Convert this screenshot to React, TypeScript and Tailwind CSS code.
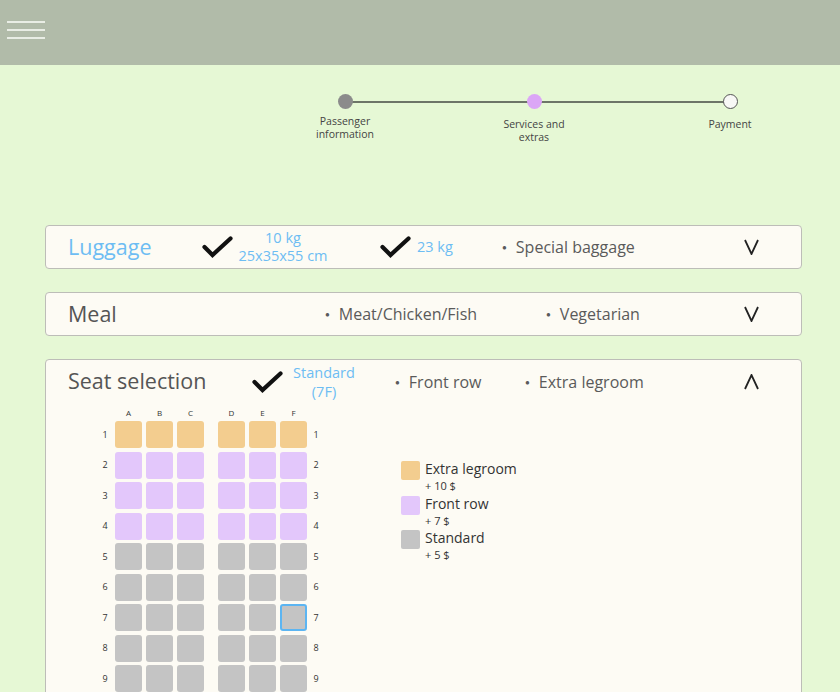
import React from "react";

const F = { fontFamily: "'Open Sans', 'Noto Sans', sans-serif" };

function Check({ className = "" }: { className?: string }) {
  return (
    <svg width="31" height="22" viewBox="0 0 31 22" className={className}>
      <path d="M2.5 11 L10.5 19 L28.5 2.5" fill="none" stroke="#111" strokeWidth="4.2" strokeLinecap="round" strokeLinejoin="miter" />
    </svg>
  );
}

function Chevron({ up = false }: { up?: boolean }) {
  return (
    <svg width="15" height="16" viewBox="0 0 15 16">
      <path d={up ? "M1 15 L7.5 1 L14 15" : "M1 1 L7.5 15 L14 1"} fill="none" stroke="#222" strokeWidth="1.8" />
    </svg>
  );
}

function Bullet({ text }: { text: string }) {
  return (
    <span className="flex items-center text-[16px] text-[#5a5a5a]">
      <span className="text-[8px] mr-[9px]">●</span>
      {text}
    </span>
  );
}

type SeatKind = "o" | "p" | "g";
const seatColor: Record<SeatKind, string> = {
  o: "bg-[#f3cd8f]",
  p: "bg-[#e3c7fb]",
  g: "bg-[#c4c4c4]",
};

function Seat({ kind, selected = false }: { kind: SeatKind; selected?: boolean }) {
  return (
    <div
      className={`w-[27px] h-[27px] rounded-[3px] ${seatColor[kind]} ${selected ? "border-2 border-[#5cb5f2]" : ""}`}
    />
  );
}

export default function App() {
  const rows = [1, 2, 3, 4, 5, 6, 7, 8, 9, 10, 11];
  const kindFor = (r: number): SeatKind => (r === 1 ? "o" : r <= 4 ? "p" : "g");
  return (
    <div className="w-[840px] h-[692px] overflow-hidden bg-[#e6f8d5]" style={F}>
      {/* Header */}
      <div className="h-[65px] bg-[#b1bba9] flex items-start pl-[7px] pt-[21px]">
        <div className="flex flex-col gap-[6px]">
          <div className="w-[38px] h-[2px] bg-[#e9ede5]" />
          <div className="w-[38px] h-[2px] bg-[#e9ede5]" />
          <div className="w-[38px] h-[2px] bg-[#e9ede5]" />
        </div>
      </div>

      {/* Stepper */}
      <div className="relative ml-[295px] mt-[29px] w-[485px] h-[131px]">
        <div className="absolute left-[50px] top-[7px] w-[385px] h-[1.5px] bg-[#6d7568]" />
        <div className="relative flex">
          <div className="w-[100px] flex flex-col items-center">
            <div className="w-[15px] h-[15px] rounded-full bg-[#8b8b8b]" />
            <div className="mt-[6px] text-[10.5px] leading-[13px] text-[#444] text-center">Passenger<br />information</div>
          </div>
          <div className="ml-[89px] w-[100px] flex flex-col items-center">
            <div className="w-[15px] h-[15px] rounded-full bg-[#dba6f6]" />
            <div className="mt-[9px] text-[10.5px] leading-[13px] text-[#444] text-center">Services and<br />extras</div>
          </div>
          <div className="ml-[96px] w-[100px] flex flex-col items-center">
            <div className="w-[15px] h-[15px] rounded-full bg-[#f8f8f6] border-[1.5px] border-[#555]" />
            <div className="mt-[9px] text-[10.5px] leading-[13px] text-[#444] text-center">Payment</div>
          </div>
        </div>
      </div>

      {/* Cards */}
      <div className="ml-[45px] w-[757px] flex flex-col gap-[23px]">
        {/* Luggage */}
        <div className="h-[44px] rounded-[4px] border-[1.5px] border-[#bdbdb8] bg-[#fdfbf4] flex items-center pl-[22px]">
          <div className="w-[134px] text-[21.5px] text-[#6dbdf3]">Luggage</div>
          <div className="w-[35px] flex"><Check /></div>
          <div className="w-[92px] flex flex-col items-center text-[14.5px] leading-[18px] text-[#6dbdf3] whitespace-nowrap">
            <span>10 kg</span>
            <span>25x35x55 cm</span>
          </div>
          <div className="w-[51px]" />
          <div className="w-[37px] flex"><Check /></div>
          <div className="w-[85px] text-[14.5px] text-[#6dbdf3]">23 kg</div>
          <div className="w-[242px]"><Bullet text="Special baggage" /></div>
          <Chevron />
        </div>

        {/* Meal */}
        <div className="h-[44px] rounded-[4px] border-[1.5px] border-[#bdbdb8] bg-[#fdfbf4] flex items-center pl-[22px]">
          <div className="w-[257px] text-[21.5px] text-[#555]">Meal</div>
          <div className="w-[221px]"><Bullet text="Meat/Chicken/Fish" /></div>
          <div className="w-[198px]"><Bullet text="Vegetarian" /></div>
          <Chevron />
        </div>

        {/* Seat selection */}
        <div className="h-[420px] rounded-[4px] border-[1.5px] border-[#bdbdb8] bg-[#fdfbf4] pl-[22px]">
          <div className="h-[43px] flex items-center">
            <div className="w-[184px] text-[21.5px] text-[#555]">Seat selection</div>
            <div className="w-[39px] flex"><Check /></div>
            <div className="w-[104px]">
              <div className="w-[66px] flex flex-col items-center text-[14.5px] leading-[19px] text-[#6dbdf3] whitespace-nowrap">
                <span>Standard</span>
                <span>(7F)</span>
              </div>
            </div>
            <div className="w-[130px]"><Bullet text="Front row" /></div>
            <div className="w-[219px]"><Bullet text="Extra legroom" /></div>
            <Chevron up />
          </div>

          <div className="flex">
            {/* Seat map */}
            <div className="ml-[32px] flex flex-col">
              <div className="flex h-[14px] items-end text-[8px] text-[#333] leading-none">
                <div className="w-[15px]" />
                <div className="flex gap-[4px]">
                  {["A", "B", "C"].map((l) => (
                    <div key={l} className="w-[27px] text-center">{l}</div>
                  ))}
                </div>
                <div className="w-[14px]" />
                <div className="flex gap-[4px]">
                  {["D", "E", "F"].map((l) => (
                    <div key={l} className="w-[27px] text-center">{l}</div>
                  ))}
                </div>
              </div>
              <div className="mt-[4px] flex flex-col gap-[3.5px]">
                {rows.map((r) => (
                  <div key={r} className="flex items-center text-[9px] text-[#333]">
                    <div className="w-[10px] text-center">{r}</div>
                    <div className="w-[5px]" />
                    <div className="flex gap-[4px]">
                      <Seat kind={kindFor(r)} />
                      <Seat kind={kindFor(r)} />
                      <Seat kind={kindFor(r)} />
                    </div>
                    <div className="w-[14px]" />
                    <div className="flex gap-[4px]">
                      <Seat kind={kindFor(r)} />
                      <Seat kind={kindFor(r)} />
                      <Seat kind={kindFor(r)} selected={r === 7} />
                    </div>
                    <div className="w-[4px]" />
                    <div className="w-[10px] text-center">{r}</div>
                  </div>
                ))}
              </div>
            </div>

            {/* Legend */}
            <div className="ml-[80px] mt-[58px] flex flex-col gap-[2.5px]">
              {[
                { c: "bg-[#f3cd8f]", t: "Extra legroom", p: "+ 10 $" },
                { c: "bg-[#e3c7fb]", t: "Front row", p: "+ 7 $" },
                { c: "bg-[#c4c4c4]", t: "Standard", p: "+ 5 $" },
              ].map((it) => (
                <div key={it.t} className="flex items-start gap-[5px]">
                  <div className={`w-[19px] h-[19px] rounded-[2px] ${it.c}`} />
                  <div className="flex flex-col -mt-[1px]">
                    <div className="text-[14px] leading-[18px] text-[#333]">{it.t}</div>
                    <div className="text-[11px] leading-[15px] text-[#333]">{it.p}</div>
                  </div>
                </div>
              ))}
            </div>
          </div>
        </div>
      </div>
    </div>
  );
}
